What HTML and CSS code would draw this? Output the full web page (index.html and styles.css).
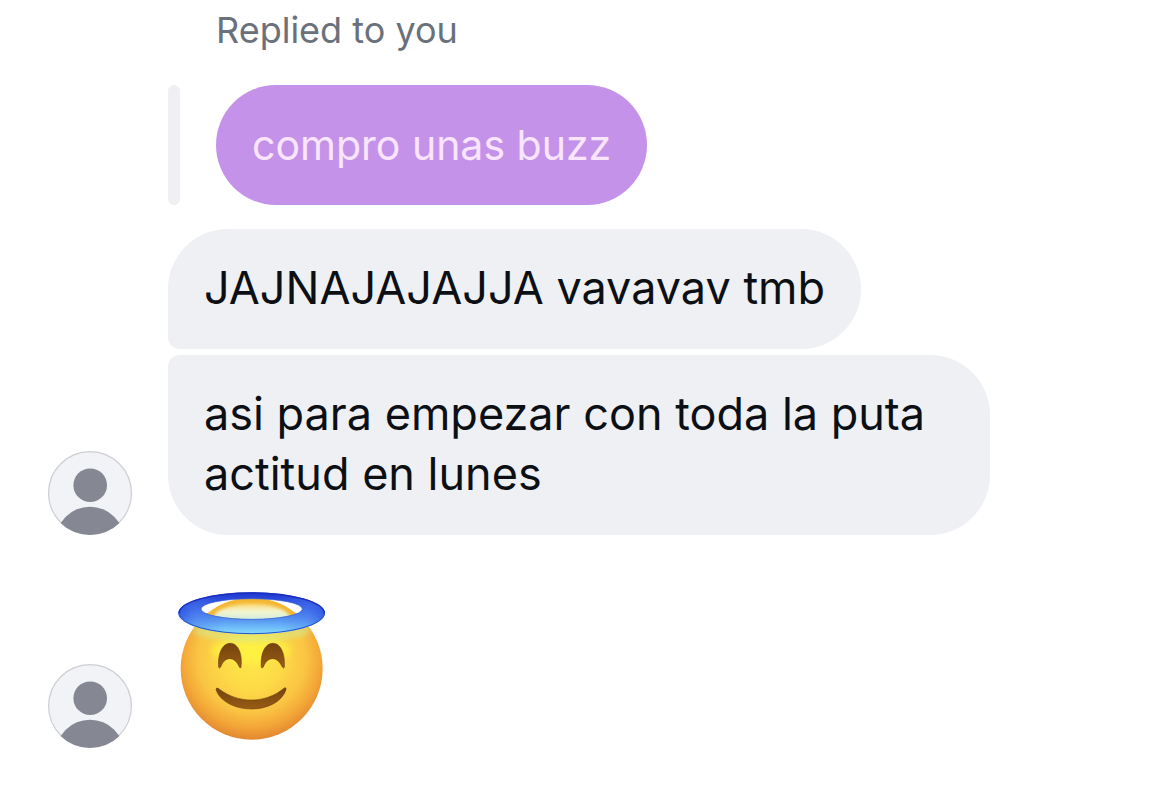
FILE: index.html
```
<!DOCTYPE html>
<html lang="es">
<head>
<meta charset="utf-8">
<meta name="viewport" content="width=device-width, initial-scale=1">
<title>Chat</title>
<link rel="stylesheet" href="styles.css">
</head>
<body>
<svg class="defs" aria-hidden="true">
  <defs>
    <clipPath id="avatar-clip"><circle cx="42" cy="42" r="42"/></clipPath>
    <symbol id="avatar" viewBox="0 0 84 84">
      <circle cx="42" cy="42" r="41.4" fill="#f1f3f6" stroke="#cdced3" stroke-width="1.2"/>
      <g clip-path="url(#avatar-clip)" fill="#858893">
        <circle cx="42.2" cy="34.2" r="16.8"/>
        <circle cx="42" cy="90" r="34.3"/>
      </g>
    </symbol>
  </defs>
</svg>
<main class="chat">
  <section class="row">
    <svg class="avatar" role="img" aria-label="Avatar"><use href="#avatar"/></svg>
    <div class="messages">
      <p class="reply-label">Replied to you</p>
      <div class="reply">
        <p class="bubble quoted">compro unas buzz</p>
      </div>
      <p class="bubble first">JAJNAJAJAJJA vavavav tmb</p>
      <p class="bubble last">asi para empezar con toda la puta actitud en lunes</p>
    </div>
  </section>
  <section class="row">
    <svg class="avatar" role="img" aria-label="Avatar"><use href="#avatar"/></svg>
    <svg class="emoji" viewBox="24 39 480 480" role="img" aria-label="Smiling face with halo">
      <defs>
        <radialGradient id="face" gradientUnits="userSpaceOnUse" cx="275" cy="250" r="250">
          <stop offset="0" stop-color="#fee848"/>
          <stop offset=".35" stop-color="#fddb47"/>
          <stop offset=".65" stop-color="#fac443"/>
          <stop offset=".83" stop-color="#f3a637"/>
          <stop offset="1" stop-color="#e08330"/>
        </radialGradient>
        <linearGradient id="halo" gradientUnits="userSpaceOnUse" x1="0" y1="52" x2="0" y2="178">
          <stop offset="0" stop-color="#1f36cd"/>
          <stop offset=".15" stop-color="#2a48da"/>
          <stop offset=".45" stop-color="#4272ec"/>
          <stop offset=".65" stop-color="#5795f2"/>
          <stop offset=".82" stop-color="#6cb9f8"/>
          <stop offset="1" stop-color="#86dcfb"/>
        </linearGradient>
        <linearGradient id="halo-sides" gradientUnits="userSpaceOnUse" x1="55" y1="0" x2="495" y2="0">
          <stop offset="0" stop-color="#2446dc"/>
          <stop offset=".12" stop-color="#4a76ee" stop-opacity=".5"/>
          <stop offset=".3" stop-color="#4a76ee" stop-opacity="0"/>
          <stop offset=".7" stop-color="#4a76ee" stop-opacity="0"/>
          <stop offset=".88" stop-color="#4a76ee" stop-opacity=".5"/>
          <stop offset="1" stop-color="#2446dc"/>
        </linearGradient>
        <linearGradient id="brow" gradientUnits="userSpaceOnUse" x1="0" y1="72" x2="0" y2="134">
          <stop offset="0" stop-color="#f6bd35"/>
          <stop offset=".3" stop-color="#f9df84"/>
          <stop offset=".6" stop-color="#f3f5cf"/>
          <stop offset="1" stop-color="#d0eee0"/>
        </linearGradient>
        <linearGradient id="feature" x1="0" y1="0" x2="0" y2="1">
          <stop offset="0" stop-color="#75430e"/>
          <stop offset="1" stop-color="#985d14"/>
        </linearGradient>
        <filter id="soft" x="-20%" y="-80%" width="140%" height="260%"><feGaussianBlur stdDeviation="9"/></filter>
        <filter id="slight" x="-10%" y="-20%" width="120%" height="140%"><feGaussianBlur stdDeviation="4"/></filter>
        <clipPath id="face-clip"><circle cx="275" cy="281" r="213"/></clipPath>
        <clipPath id="hole-clip"><ellipse cx="275" cy="102" rx="152" ry="31"/></clipPath>
      </defs>
      <circle cx="275" cy="281" r="213" fill="url(#face)"/>
      <g clip-path="url(#face-clip)">
        <ellipse cx="275" cy="225" rx="120" ry="38" fill="#fff83f" opacity=".6" filter="url(#soft)"/>
        <path d="M90 150Q275 212 460 150L440 178Q275 216 110 178Z" fill="#d5e98c" opacity=".85" filter="url(#soft)"/>
      </g>
      <g clip-path="url(#hole-clip)">
        <rect x="120" y="65" width="310" height="70" fill="#fff"/>
        <circle cx="275" cy="281" r="213" fill="#f5b733"/>
        <ellipse cx="275" cy="132" rx="116" ry="46" fill="url(#brow)" filter="url(#slight)"/>
      </g>
      <path fill="url(#halo)" fill-rule="evenodd" d="M55 115a220 63 0 1 0 440 0a220 63 0 1 0-440 0ZM123 102a152 31 0 1 0 304 0a152 31 0 1 0-304 0Z"/>
      <path fill="url(#halo-sides)" opacity=".65" fill-rule="evenodd" d="M55 115a220 63 0 1 0 440 0a220 63 0 1 0-440 0ZM123 102a152 31 0 1 0 304 0a152 31 0 1 0-304 0Z"/>
      <path d="M57 115a218 61 0 0 0 436 0" fill="none" stroke="#2455cc" stroke-width="3"/>
      <path d="M57 115a218 61 0 0 1 436 0" fill="none" stroke="#1a2dbd" stroke-width="4"/>
      <ellipse cx="275" cy="102" rx="152" ry="31" fill="none" stroke="#2f58d4" stroke-width="2"/>
      <g fill="url(#feature)" stroke="#693b0c" stroke-opacity=".55" stroke-width="3" stroke-linejoin="round">
        <path d="M176 277C173 235 187 205 211 205C235 205 248 238 243 277Q242 282 238 276C231 260 221 251 209 251C197 251 188 260 182 276Q178 282 176 277Z"/>
        <path d="M304 277C301 235 315 205 339 205C363 205 376 238 373 277Q371 282 367 276C359 260 350 251 338 251C326 251 316 260 310 276Q306 282 304 277Z"/>
        <path d="M168 343Q169 336 176 341C204 363 238 375 274 375C311 375 345 362 370 341Q379 334 378 344C367 379 324 402 274 402C224 402 178 378 168 343Z"/>
      </g>
    </svg>
  </section>
</main>
</body>
</html>
```
FILE: styles.css
```
* {
  box-sizing: border-box;
}

body {
  margin: 0;
  background: #fff;
  color: #0c1014;
  font-family: Inter, "Noto Sans", sans-serif;
}

.defs {
  position: absolute;
  width: 0;
  height: 0;
}

.chat {
  display: flex;
  flex-direction: column;
  gap: 53px;
  padding: 8px 0 40px 48px;
}

.row {
  display: flex;
  align-items: flex-end;
  gap: 36px;
}

.avatar {
  flex: none;
  width: 84px;
  height: 84px;
}

.messages {
  display: flex;
  flex: 1;
  flex-direction: column;
  align-items: flex-start;
  min-width: 0;
}

.reply-label {
  margin: 0 0 33px 48px;
  color: #6a717a;
  font-size: 36px;
  line-height: 44px;
}

.reply {
  display: flex;
  gap: 36px;
  margin-bottom: 24px;
}

.reply::before {
  content: "";
  width: 12px;
  border-radius: 6px;
  background: #f0f0f4;
}

.bubble {
  max-width: 82%;
  margin: 0;
  padding: 29px 36px 31px;
  border-radius: 60px;
  background: #eff0f4;
  font-size: 45px;
  line-height: 60px;
}

.quoted {
  max-width: none;
  padding: 30px 36px;
  background: #c592ea;
  color: #f9e5fd;
  font-size: 41px;
}

.first {
  margin-bottom: 6px;
  border-bottom-left-radius: 12px;
}

.last {
  border-top-left-radius: 12px;
}

.emoji {
  flex: none;
  width: 160px;
  height: 160px;
}
```
